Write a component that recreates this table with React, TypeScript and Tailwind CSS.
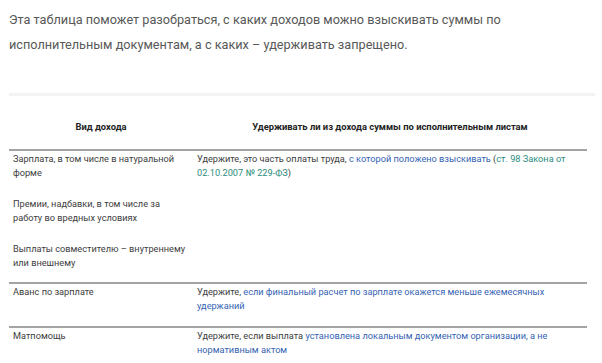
const rows = [
  {
    income: [
      'Зарплата, в том числе в натуральной форме',
      'Премии, надбавки, в том числе за работу во вредных условиях',
      'Выплаты совместителю – внутреннему или внешнему',
    ],
    answer: (
      <>
        Удержите, это часть оплаты труда,{' '}
        <a className="text-[#3563b3]">с которой положено взыскивать</a>{' '}
        (<a className="text-[#2b8c7c]">ст. 98 Закона от 02.10.2007 № 229-ФЗ</a>)
      </>
    ),
  },
  {
    income: ['Аванс по зарплате'],
    answer: (
      <>
        Удержите,{' '}
        <a className="text-[#3563b3]">
          если финальный расчет по зарплате окажется меньше ежемесячных удержаний
        </a>
      </>
    ),
  },
  {
    income: ['Матпомощь'],
    answer: (
      <>
        Удержите, если выплата{' '}
        <a className="text-[#3563b3]">
          установлена локальным документом организации, а не нормативным актом
        </a>
      </>
    ),
  },
];

export default function App() {
  return (
    <div className="w-[602px] h-[363px] overflow-hidden bg-white px-[9px] pt-[7px] font-['Roboto',sans-serif]">
      <p className="text-[12.7px] leading-[25px] text-[#585858] w-[560px]">
        Эта таблица поможет разобраться, с каких доходов можно взыскивать суммы по
        исполнительным документам, а с каких – удерживать запрещено.
      </p>

      <div className="mt-[36px] h-[3px] w-[586px] bg-[#f3f3f1]" />

      <table className="w-[578px] table-fixed border-collapse text-[9.2px] leading-[14px] text-[#3d3d3d]">
        <colgroup>
          <col className="w-[184px]" />
          <col />
        </colgroup>
        <thead>
          <tr className="border-b-2 border-[#a3a3a3]">
            <th className="h-[54px] pt-[8px] text-center align-middle text-[9.4px] font-bold text-[#222]">
              Вид дохода
            </th>
            <th className="h-[54px] pt-[8px] text-center align-middle text-[9.4px] font-bold text-[#222]">
              Удерживать ли из дохода суммы по исполнительным листам
            </th>
          </tr>
        </thead>
        <tbody>
          {rows.map((row, i) => (
            <tr key={i} className={i > 0 ? 'border-t-2 border-[#a3a3a3]' : ''}>
              <td className="align-top pl-[4px] pr-[2px] pt-[1px] pb-[12px]">
                <div className="flex flex-col gap-[17px]">
                  {row.income.map((t) => (
                    <p key={t}>{t}</p>
                  ))}
                </div>
              </td>
              <td className="align-top pl-[4px] pr-[12px] pt-[1px] pb-[13px]">{row.answer}</td>
            </tr>
          ))}
        </tbody>
      </table>
    </div>
  );
}
